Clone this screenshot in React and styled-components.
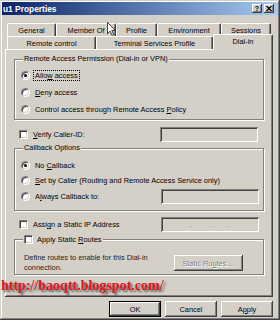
import React from "react";
import styled, { createGlobalStyle, css } from "styled-components";

const face = "#d4d0c8";

const GlobalStyle = createGlobalStyle`
  html, body {
    margin: 0;
    padding: 0;
    background: ${face};
  }
  body {
    width: 280px;
    height: 320px;
    overflow: hidden;
    font-family: "Liberation Sans", Arial, sans-serif;
    font-size: 7.4px;
    color: #000;
  }
`;

const raised = css`
  box-shadow: inset -1px -1px #404040, inset 1px 1px #fff, inset -2px -2px #808080;
`;

const sunken = css`
  box-shadow: inset 1px 1px #808080, inset -1px -1px #fff, inset 2px 2px #404040,
    inset -2px -2px ${face};
`;

const Window = styled.div`
  position: relative;
  box-sizing: border-box;
  width: 280px;
  height: 320px;
  padding: 2px;
  background: ${face};
  box-shadow: inset -1px -1px #404040, inset 1px 1px ${face}, inset -2px -2px #808080,
    inset 2px 2px #fff;
  display: flex;
  flex-direction: column;
`;

const TitleBar = styled.div`
  height: 13px;
  display: flex;
  align-items: center;
  padding: 0 4px 0 1px;
  background: linear-gradient(to right, #0a246a, #a6caf0);
  color: #fff;
  font-weight: bold;
  font-size: 8.4px;
`;

const Title = styled.span`
  flex: 1;
`;

const CaptionButton = styled.span`
  box-sizing: border-box;
  width: 10px;
  height: 9px;
  margin-left: ${(p) => p.$gap || 0}px;
  background: ${face};
  ${raised};
  display: flex;
  align-items: center;
  justify-content: center;
  color: #000;
  font-size: 7px;
  font-weight: bold;
  line-height: 1;
`;

const Body = styled.div`
  flex: 1;
  padding: 8px 5px 0 3px;
  display: flex;
  flex-direction: column;
`;

const Tabs = styled.div`
  position: relative;
  z-index: 2;
  padding-left: 2px;
`;

const TabRow = styled.div`
  display: flex;
  height: 13px;
  align-items: flex-end;
`;

const Tab = styled.div`
  box-sizing: border-box;
  width: ${(p) => p.$w}px;
  height: ${(p) => (p.$active ? 16 : 13)}px;
  margin-top: ${(p) => (p.$active ? -2 : 0)}px;
  margin-bottom: ${(p) => (p.$active ? -1 : 0)}px;
  position: relative;
  z-index: ${(p) => (p.$active ? 3 : 1)};
  background: ${face};
  border: 1px solid;
  border-color: #fff #404040 transparent #fff;
  border-bottom: none;
  border-radius: 2px 2px 0 0;
  box-shadow: inset -1px 0 #808080;
  display: flex;
  align-items: center;
  justify-content: center;
  padding-bottom: ${(p) => (p.$active ? 2 : 0)}px;
  white-space: nowrap;
`;

const Panel = styled.div`
  position: relative;
  z-index: 1;
  box-sizing: border-box;
  height: 248px;
  padding: 5px 9px 0 9px;
  background: ${face};
  ${raised};
  display: flex;
  flex-direction: column;
`;

const Group = styled.fieldset`
  margin: ${(p) => p.$mt || 0}px 0 0 0;
  padding: ${(p) => p.$pt || 0}px ${(p) => p.$pr || 0}px ${(p) => p.$pb || 0}px 5px;
  border: 1px solid #808080;
  box-shadow: inset 1px 1px #fff, 1px 1px #fff;
  min-width: 0;
`;

const Legend = styled.legend`
  margin-left: 3px;
  padding: 0 1px;
  line-height: ${(p) => p.$lh || 10}px;
  background: ${face};
  display: flex;
  align-items: center;
  gap: 4px;
`;

const Row = styled.div`
  display: flex;
  align-items: center;
  height: ${(p) => p.$h || 15}px;
  margin-top: ${(p) => p.$mt || 0}px;
  padding-left: ${(p) => p.$pl || 0}px;
  padding-right: ${(p) => p.$pr || 0}px;
  gap: 4px;
  white-space: nowrap;
`;

const Radio = styled.span`
  box-sizing: border-box;
  flex: none;
  width: 9px;
  height: 9px;
  margin-left: 1px;
  border-radius: 50%;
  background: #fff;
  border: 1px solid;
  border-color: #808080 #fff #fff #808080;
  box-shadow: inset 1px 1px #404040, inset -1px -1px ${face};
  display: flex;
  align-items: center;
  justify-content: center;
  &::after {
    content: "";
    width: 3px;
    height: 3px;
    border-radius: 50%;
    background: ${(p) => (p.$on ? "#000" : "transparent")};
  }
`;

const Check = styled.span`
  box-sizing: border-box;
  flex: none;
  width: 9px;
  height: 9px;
  background: #fff;
  border: 1px solid;
  border-color: #808080 #fff #fff #808080;
  box-shadow: inset 1px 1px #404040, inset -1px -1px ${face};
`;

const Label = styled.span`
  padding: 0 1px;
  outline: ${(p) => (p.$focus ? "1px dotted #000" : "none")};
  line-height: 9px;
`;

const TextBox = styled.span`
  box-sizing: border-box;
  width: 98px;
  height: 15px;
  margin-left: auto;
  background: ${face};
  ${sunken};
  display: flex;
  align-items: center;
  justify-content: space-evenly;
  padding: 0 12px;
  color: #808080;
`;

const Note = styled.div`
  margin-left: 4px;
  line-height: 10px;
  color: #222;
`;

const Button = styled.div`
  box-sizing: border-box;
  width: ${(p) => p.$w || 52}px;
  height: 16px;
  background: ${face};
  ${raised};
  ${(p) =>
    p.$default &&
    css`
      border: 1px solid #000;
    `}
  display: flex;
  align-items: center;
  justify-content: center;
  color: ${(p) => (p.$disabled ? "#808080" : "#000")};
  text-shadow: ${(p) => (p.$disabled ? "1px 1px #fff" : "none")};
`;

const RoutesButton = styled(Button)`
  margin-left: auto;
  margin-right: 20px;
`;

const Buttons = styled.div`
  display: flex;
  justify-content: flex-end;
  gap: 4px;
  margin-top: 4px;
`;

const GroupContent = styled.div`
  display: flex;
  align-items: center;
  height: 20px;
`;

const Watermark = styled.div`
  position: absolute;
  z-index: 10;
  left: 1px;
  top: 278px;
  font-family: "Liberation Serif", "Times New Roman", serif;
  font-weight: bold;
  font-size: 14px;
  line-height: 16px;
  color: #e3141c;
  text-shadow: 2px 2px 2px rgba(0, 0, 0, 0.55);
  white-space: nowrap;
`;

const Cursor = styled.svg`
  position: absolute;
  left: 107px;
  top: 22px;
  z-index: 5;
`;

const rowOneTabs = [
  ["General", 49],
  ["Member Of", 60],
  ["Profile", 41],
  ["Environment", 64],
  ["Sessions", 50],
];

export default function App() {
  return (
    <>
      <GlobalStyle />
      <Window>
        <TitleBar>
          <Title>u1 Properties</Title>
          <CaptionButton>?</CaptionButton>
          <CaptionButton $gap={2}>
            <svg width="6" height="5" viewBox="0 0 6 5">
              <path d="M0.5 0 L5.5 5 M5.5 0 L0.5 5" stroke="#000" strokeWidth="1.3" />
            </svg>
          </CaptionButton>
        </TitleBar>
        <Body>
          <Tabs>
            <TabRow>
              {rowOneTabs.map(([name, w]) => (
                <Tab key={name} $w={w}>
                  {name}
                </Tab>
              ))}
            </TabRow>
            <TabRow>
              <Tab $w={89}>Remote control</Tab>
              <Tab $w={117}>Terminal Services Profile</Tab>
              <Tab $w={60} $active>
                Dial-in
              </Tab>
            </TabRow>
          </Tabs>
          <Panel>
            <Group $pt={3} $pb={1}>
              <Legend>Remote Access Permission (Dial-in or VPN)</Legend>
              <Row $h={17}>
                <Radio $on />
                <Label $focus>
                  Allo<u>w</u> access
                </Label>
              </Row>
              <Row $h={17}>
                <Radio />
                <Label>
                  <u>D</u>eny access
                </Label>
              </Row>
              <Row $h={17}>
                <Radio />
                <Label>
                  Control access through Remote Access <u>P</u>olicy
                </Label>
              </Row>
            </Group>

            <Row $mt={7} $pl={5} $pr={6}>
              <Check />
              <Label>
                <u>V</u>erify Caller-ID:
              </Label>
              <TextBox />
            </Row>

            <Group $mt={1} $pt={4} $pb={5} $pr={4}>
              <Legend>Callback Options</Legend>
              <Row $h={16}>
                <Radio $on />
                <Label>
                  No <u>C</u>allback
                </Label>
              </Row>
              <Row $h={15}>
                <Radio />
                <Label>
                  <u>S</u>et by Caller (Routing and Remote Access Service only)
                </Label>
              </Row>
              <Row $h={17}>
                <Radio />
                <Label>
                  A<u>l</u>ways Callback to:
                </Label>
                <TextBox />
              </Row>
            </Group>

            <Row $mt={6} $pl={5} $pr={5}>
              <Check />
              <Label>
                Assi<u>g</u>n a Static IP Address
              </Label>
              <TextBox>
                <span>.</span>
                <span>.</span>
                <span>.</span>
              </TextBox>
            </Row>

            <Group $mt={2} $pt={8} $pb={1}>
              <Legend $lh={11}>
                <Check />
                <span>
                  Apply Static <u>R</u>outes
                </span>
              </Legend>
              <GroupContent>
                <Note>
                  Define routes to enable for this Dial-in
                  <br />
                  connection.
                </Note>
                <RoutesButton $w={69} $disabled>
                  Static Ro<u>u</u>tes ...
                </RoutesButton>
              </GroupContent>
            </Group>
          </Panel>
          <Buttons>
            <Button $default>OK</Button>
            <Button>Cancel</Button>
            <Button>
              A<u>p</u>ply
            </Button>
          </Buttons>
        </Body>
        <Watermark>http://baoqtt.blogspot.com/</Watermark>
        <Cursor width="9" height="14" viewBox="0 0 12 19">
          <path
            d="M0.5 0.5 L0.5 16 L4.2 12.4 L6.8 18.2 L9 17.2 L6.5 11.5 L11.2 11.5 Z"
            fill="#fff"
            stroke="#000"
            strokeWidth="1"
          />
        </Cursor>
      </Window>
    </>
  );
}
